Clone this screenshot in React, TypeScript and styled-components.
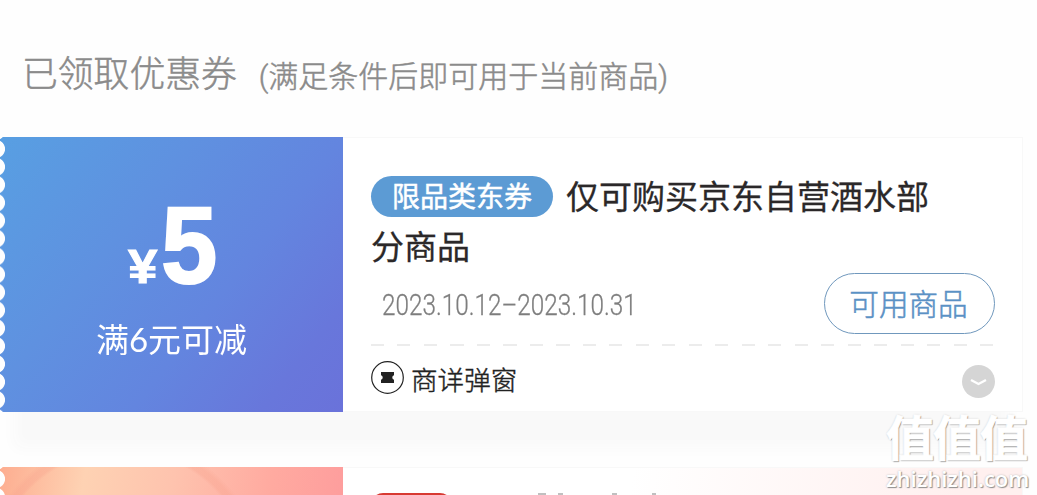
import React from 'react';
import styled, { createGlobalStyle } from 'styled-components';

const GlobalStyle = createGlobalStyle`
    * {
        box-sizing: border-box;
    }

    body {
        margin: 0;
        background: #fefefe;
        font-family: "Liberation Sans", "Noto Sans CJK SC", sans-serif;
    }
`;

const Page = styled.main`
    position: relative;
    width: 1037px;
    height: 495px;
    overflow: hidden;
    background: #fefefe;
`;

const Header = styled.header`
    display: flex;
    align-items: baseline;
    height: 137px;
    padding: 45px 0 0 22px;
    color: #8b8b8b;
    white-space: nowrap;
    -webkit-text-stroke: 0.5px #8b8b8b;
`;

const Heading = styled.h1`
    margin: 0;
    font-family: "Noto Sans CJK SC", sans-serif;
    font-size: 35.8px;
    font-weight: 300;
    line-height: 52px;
`;

const Hint = styled.span`
    display: inline-block;
    margin-left: 22px;
    font-family: Roboto, "Noto Sans CJK SC", sans-serif;
    font-size: 30px;
    font-weight: 300;
`;

const CouponList = styled.div`
    display: flex;
    flex-direction: column;
    gap: 55px;
`;

const Card = styled.section`
    display: flex;
    width: 1023px;
    height: 275px;
`;

const ShadowCard = styled(Card)`
    box-shadow: 0 50px 14px -14px #f9f9f9;
`;

const Ticket = styled.div<{ $background: string }>`
    display: flex;
    flex: 0 0 343px;
    flex-direction: column;
    align-items: center;
    background: ${props => props.$background};
    color: #fff;
    mask-image: radial-gradient(circle at -4px 50%, transparent 8.6px, #000 9.4px);
    mask-size: 100% 17.93px;
    mask-position: 0 3px;
`;

const Price = styled.div`
    display: flex;
    align-items: baseline;
    height: 170px;
    padding: 46px 0 0 5px;
    font-weight: 700;
`;

const Currency = styled.span`
    font-size: 49px;
    transform: scaleX(1.08);
    -webkit-text-stroke: 1px #fff;
`;

const Amount = styled.span`
    margin-left: 3px;
    font-size: 109px;
    line-height: 125px;
    transform: scaleX(0.93);
    -webkit-text-stroke: 2px #fff;
`;

const Condition = styled.div`
    display: flex;
    font-family: Lato, "Noto Sans CJK SC", sans-serif;
    font-size: 33px;
    line-height: 64px;
`;

const Detail = styled.div<{ $tint?: boolean }>`
    flex: 1;
    padding: 32px 27px 0 28px;
    border: 1px solid #f8f8f8;
    border-left: 0;
    background: ${props => props.$tint ? 'linear-gradient(100deg, #fff 40%, #fff0ef 85%)' : '#fff'};
`;

const Title = styled.h2`
    margin: 0;
    height: 103px;
    width: 580px;
    font-family: "Noto Sans CJK SC", sans-serif;
    font-size: 33px;
    font-weight: 400;
    line-height: 50px;
    color: #2b2829;
    -webkit-text-stroke: 0.3px #2b2829;
`;

const Tag = styled.span`
    display: inline-block;
    width: 182px;
    height: 41px;
    margin-right: 13px;
    border-radius: 21px;
    background: #5c9bd4;
    color: #fff;
    font-size: 28px;
    font-weight: 400;
    line-height: 39px;
    text-align: center;
    vertical-align: 2px;
    -webkit-text-stroke: 0.5px #fff;
`;

const Validity = styled.div`
    display: flex;
    align-items: center;
    justify-content: space-between;
    height: 61px;
    padding-left: 11px;
`;

const DateRange = styled.span`
    padding-top: 2px;
    font-family: Roboto, sans-serif;
    font-size: 30px;
    font-weight: 300;
    color: #7e7e7e;
    white-space: nowrap;
    transform: scaleX(0.81);
    transform-origin: left center;
    -webkit-text-stroke: 0.3px #7e7e7e;
`;

const UseButton = styled.button`
    flex: none;
    width: 171px;
    height: 61px;
    padding: 0 2px 0 0;
    border: 1px solid #7098bd;
    border-radius: 31px;
    background: #fff;
    font-family: "Noto Sans CJK SC", sans-serif;
    font-size: 29.6px;
    font-weight: 300;
    line-height: 57px;
    color: #5b91c5;
    -webkit-text-stroke: 0.5px #5b91c5;
`;

const UseLabel = styled.span`
    display: block;
    height: 59px;
`;

const Divider = styled.div`
    height: 2px;
    margin-top: 10px;
    background: repeating-linear-gradient(90deg, #ececec 0 13px, transparent 13px 26.5px);
`;

const Source = styled.div`
    display: flex;
    align-items: center;
    height: 34px;
    margin-top: 15px;
    font-family: "Noto Sans CJK SC", sans-serif;
    font-size: 26.6px;
    font-weight: 300;
    color: #222;
    -webkit-text-stroke: 0.4px #222;
`;

const SourceName = styled.span`
    flex: 1;
    margin-left: 6px;
    padding-top: 1px;
    line-height: 34px;
`;

const Toggle = styled.svg`
    margin-top: 7px;
`;

// The next coupon only peeks in at the bottom of the list.
const NextTitle = styled.div`
    display: flex;
    align-items: flex-start;
    margin-top: -7px;
`;

const NextTag = styled.span`
    width: 81px;
    height: 41px;
    border-radius: 12px;
    background: #d83a32;
`;

const Stroke = styled.span<{ $width: number; $gap: number }>`
    width: ${props => props.$width}px;
    height: 8px;
    margin-left: ${props => props.$gap}px;
    background: #c0c0c0;
`;

const Watermark = styled.div`
    position: absolute;
    right: 8px;
    bottom: 3px;
    width: 143px;
    color: #fff;
    text-shadow: 1px 1px 1px #8e8e8e, 0 0 2px #bbb;
`;

const WatermarkName = styled.div`
    font-family: "Noto Sans CJK SC", sans-serif;
    font-size: 48px;
    font-weight: 700;
    line-height: 57px;
    letter-spacing: -1px;
    white-space: nowrap;
    -webkit-text-stroke: 0.8px #fff;
`;

const WatermarkSite = styled.div`
    font-family: "Open Sans", sans-serif;
    font-size: 22px;
    font-weight: 600;
    line-height: 28px;
    white-space: nowrap;
`;

const BLUE = 'linear-gradient(128deg, #589fe2 0%, #5f91e0 35%, #6385df 62%, #6877db 85%, #6a72da 100%)';
const PEACH = 'radial-gradient(circle at 122px 113px, #ffe0bd00 129px, #f7a18c55 132px 137px, transparent 142px), linear-gradient(100deg, #fdad90 0%, #fed2b3 22%, #fec3ae 45%, #ffaaa0 70%, #fd969b 100%)';

const App: React.FC = () => {
    return (
        <Page>
            <GlobalStyle />
            <Header>
                <Heading>已领取优惠券</Heading>
                <Hint>(满足条件后即可用于当前商品)</Hint>
            </Header>
            <CouponList>
                <ShadowCard>
                    <Ticket $background={BLUE}>
                        <Price>
                            <Currency>¥</Currency>
                            <Amount>5</Amount>
                        </Price>
                        <Condition>满6元可减</Condition>
                    </Ticket>
                    <Detail>
                        <Title><Tag>限品类东券</Tag>仅可购买京东自营酒水部分商品</Title>
                        <Validity>
                            <DateRange>2023.10.12–2023.10.31</DateRange>
                            <UseButton>
                                <UseLabel>可用商品</UseLabel>
                            </UseButton>
                        </Validity>
                        <Divider />
                        <Source>
                            <svg width="34" height="34" viewBox="0 0 34 34">
                                <circle cx="16.5" cy="16.5" r="15.8" fill="#fff" stroke="#222" strokeWidth="1.2" />
                                <path d="M10 11h13v3.2a2.4 2.4 0 0 0 0 4.6V22H10v-3.2a2.4 2.4 0 0 0 0-4.6z" fill="#222" />
                            </svg>
                            <SourceName>商详弹窗</SourceName>
                            <Toggle width="33" height="33" viewBox="0 0 33 33">
                                <circle cx="16.5" cy="16.5" r="16.5" fill="#d5d5d5" />
                                <path d="M9 15l7.5 4 7.5-4" fill="none" stroke="#fff" strokeWidth="2.4" />
                            </Toggle>
                        </Source>
                    </Detail>
                </ShadowCard>
                <Card>
                    <Ticket $background={PEACH} />
                    <Detail $tint>
                        <NextTitle>
                            <NextTag />
                            <Stroke $width={8} $gap={86} />
                            <Stroke $width={5} $gap={12} />
                            <Stroke $width={5} $gap={49} />
                            <Stroke $width={4} $gap={35} />
                        </NextTitle>
                    </Detail>
                </Card>
            </CouponList>
            <Watermark>
                <WatermarkName>值值值</WatermarkName>
                <WatermarkSite>zhizhizhi.com</WatermarkSite>
            </Watermark>
        </Page>
    );
};

export default App;
